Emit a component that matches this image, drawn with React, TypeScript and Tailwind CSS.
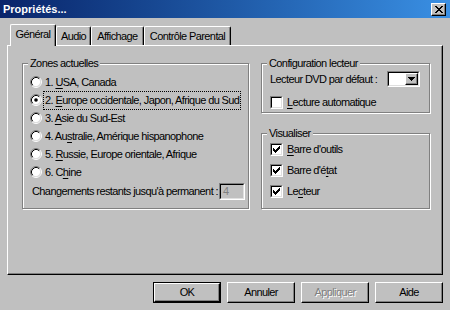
import React from "react";

function Radio({ checked }: { checked?: boolean }) {
  return (
    <svg width="12" height="12" viewBox="0 0 12 12" className="shrink-0">
      <circle cx="6" cy="6" r="4.5" fill="#fff" />
      <path d="M2.11 9.89A5.5 5.5 0 0 1 9.89 2.11" stroke="#808080" fill="none" />
      <path d="M9.89 2.11A5.5 5.5 0 0 1 2.11 9.89" stroke="#fff" fill="none" />
      <path d="M2.82 9.18A4.5 4.5 0 0 1 9.18 2.82" stroke="#000" fill="none" />
      <path d="M9.18 2.82A4.5 4.5 0 0 1 2.82 9.18" stroke="#dfdfdf" fill="none" />
      {checked && <circle cx="6" cy="6" r="1.8" fill="#000" />}
    </svg>
  );
}

function Check({ checked }: { checked?: boolean }) {
  const cols = [2, 3, 4, 3, 2, 1, 0];
  return (
    <div className="w-[13px] h-[13px] shrink-0 border border-t-[#808080] border-l-[#808080] border-b-white border-r-white">
      <div className="w-full h-full border border-t-black border-l-black border-b-[#dfdfdf] border-r-[#dfdfdf] bg-white">
        {checked && (
          <svg width="9" height="9" viewBox="0 0 9 9" shapeRendering="crispEdges">
            {cols.map((y, i) => (
              <rect key={i} x={1 + i} y={1 + y} width="1" height="3" fill="#000" />
            ))}
          </svg>
        )}
      </div>
    </div>
  );
}

function Group({
  label,
  className,
  children,
}: {
  label: string;
  className: string;
  children?: React.ReactNode;
}) {
  return (
    <div className={"relative border border-[#808080] shadow-[inset_1px_1px_0_#fff,1px_1px_0_#fff] " + className}>
      <span className="absolute left-[5px] top-[-8px] bg-[#c0c0c0] px-[2px] leading-[14px]">{label}</span>
      {children}
    </div>
  );
}

function U({ children }: { children: React.ReactNode }) {
  return <span className="underline underline-offset-[2px]">{children}</span>;
}

function Btn({
  children,
  def,
  disabled,
}: {
  children: React.ReactNode;
  def?: boolean;
  disabled?: boolean;
}) {
  const inner = (
    <div className="w-full h-full flex items-center justify-center border border-t-white border-l-white border-r-black border-b-black shadow-[inset_-1px_-1px_0_#808080]">
      <span className={disabled ? "text-[#808080] [text-shadow:1px_1px_0_#fff]" : ""}>{children}</span>
    </div>
  );
  return (
    <div className={"w-[68px] h-[21px] " + (def ? "border border-black" : "")}>{inner}</div>
  );
}

function Tab({
  label,
  w,
  selected,
}: {
  label: string;
  w: string;
  selected?: boolean;
}) {
  return (
    <div
      className={
        "flex items-center justify-center whitespace-nowrap bg-[#c0c0c0] border-t border-l border-r border-t-white border-l-white border-r-black rounded-t-[2px] shadow-[inset_-1px_0_0_#808080] " +
        w +
        (selected ? " h-[22px] mb-[-1px] relative z-10 pb-[2px]" : " h-[19px]")
      }
    >
      {label}
    </div>
  );
}

export default function App() {
  return (
    <div className="w-[450px] h-[310px] bg-[#c0c0c0] flex flex-col text-[11px] leading-[13px] tracking-[-0.6px] text-black font-['Liberation_Sans',Arial,sans-serif] overflow-hidden">
      {/* Title bar */}
      <div className="h-[18px] flex items-center justify-between pl-[3px] pr-[4px] bg-gradient-to-r from-[#0a246a] to-[#3a90e4]">
        <span className="text-white font-bold text-[11px] tracking-normal">Propriétés...</span>
        <div className="w-[15px] h-[13px] flex items-center justify-center bg-[#c0c0c0] border border-t-white border-l-white border-r-black border-b-black shadow-[inset_-1px_-1px_0_#808080]">
          <svg width="8" height="7" viewBox="0 0 8 7" shapeRendering="crispEdges">
            <path d="M0 0h2v1h1v1h2v-1h1v-1h2v1h-1v1h-1v1h-1v1h1v1h1v1h1v1h-2v-1h-1v-1h-2v1h-1v1h-2v-1h1v-1h1v-1h1v-1h-1v-1h-1v-1h-1z" fill="#000" />
          </svg>
        </div>
      </div>

      {/* Tabs */}
      <div className="mt-[6px] h-[21px] flex items-end pl-[10px]">
        <Tab label="Général" w="w-[46px]" selected />
        <Tab label="Audio" w="w-[35px]" />
        <Tab label="Affichage" w="w-[53px]" />
        <Tab label="Contrôle Parental" w="w-[87px]" />
      </div>

      {/* Panel */}
      <div className="mx-[7px] h-[230px] border border-t-white border-l-white border-r-black border-b-black shadow-[inset_-1px_-1px_0_#808080] flex pl-[14px] pt-[17px] gap-[12px]">
        <Group label="Zones actuelles" className="w-[227px] h-[146px] pt-[9px] pl-[7px] flex flex-col">
          <div className="h-[18px] flex items-center gap-[3px]">
            <Radio />
            <span>1. <U>U</U>SA, Canada</span>
          </div>
          <div className="h-[18px] flex items-center gap-[2px]">
            <Radio checked />
            <span className="outline outline-1 outline-dotted outline-black px-[1px] py-[2px] whitespace-nowrap">2. <U>E</U>urope occidentale, Japon, Afrique du Sud</span>
          </div>
          <div className="h-[18px] flex items-center gap-[3px]">
            <Radio />
            <span>3. <U>A</U>sie du Sud-Est</span>
          </div>
          <div className="h-[18px] flex items-center gap-[3px]">
            <Radio />
            <span>4. Au<U>s</U>tralie, Amérique hispanophone</span>
          </div>
          <div className="h-[18px] flex items-center gap-[3px]">
            <Radio />
            <span>5. <U>R</U>ussie, Europe orientale, Afrique</span>
          </div>
          <div className="h-[18px] flex items-center gap-[3px]">
            <Radio />
            <span>6. C<U>h</U>ine</span>
          </div>
          <div className="mt-[1px] h-[18px] flex items-center pl-[2px] pr-[3px]">
            <span className="whitespace-nowrap">Changements restants jusqu'à permanent :</span>
            <div className="ml-auto w-[26px] h-[17px] border border-t-[#808080] border-l-[#808080] border-b-white border-r-white">
              <div className="w-full h-full border border-t-black border-l-black border-b-[#dfdfdf] border-r-[#dfdfdf] flex items-center pl-[2px] text-[#808080]">
                4
              </div>
            </div>
          </div>
        </Group>

        <div className="w-[169px] flex flex-col gap-[20px]">
          <Group label="Configuration lecteur" className="h-[50px] pl-[8px] pr-[9px] pt-[7px] flex flex-col">
            <div className="h-[16px] flex items-center">
              <span className="whitespace-nowrap">Lecteur DVD par défaut :</span>
              <div className="ml-auto w-[33px] h-[16px] border border-t-[#808080] border-l-[#808080] border-b-white border-r-white">
                <div className="w-full h-full border border-t-black border-l-black border-b-[#dfdfdf] border-r-[#dfdfdf] bg-white flex justify-end">
                  <div className="w-[13px] h-full bg-[#c0c0c0] flex items-center justify-center border border-t-white border-l-white border-r-black border-b-black shadow-[inset_-1px_-1px_0_#808080]">
                    <svg width="7" height="4" viewBox="0 0 7 4" shapeRendering="crispEdges">
                      <path d="M0 0h7v1h-1v1h-1v1h-1v1h-1v-1h-1v-1h-1v-1h-1z" fill="#000" />
                    </svg>
                  </div>
                </div>
              </div>
            </div>
            <div className="mt-[9px] h-[13px] flex items-center gap-[4px]">
              <Check />
              <span><U>L</U>ecture automatique</span>
            </div>
          </Group>

          <Group label="Visualiser" className="h-[76px] pl-[8px] pt-[5px] flex flex-col">
            <div className="h-[21px] flex items-center gap-[4px]">
              <Check checked />
              <span><U>B</U>arre d'outils</span>
            </div>
            <div className="h-[21px] flex items-center gap-[4px]">
              <Check checked />
              <span>Barre d'é<U>t</U>at</span>
            </div>
            <div className="h-[21px] flex items-center gap-[4px]">
              <Check checked />
              <span>Le<U>c</U>teur</span>
            </div>
          </Group>
        </div>
      </div>

      {/* Buttons */}
      <div className="mt-[7px] flex justify-end gap-[6px] pr-[7px]">
        <Btn def>OK</Btn>
        <Btn>Annuler</Btn>
        <Btn disabled>Appliquer</Btn>
        <Btn>Aide</Btn>
      </div>
    </div>
  );
}
